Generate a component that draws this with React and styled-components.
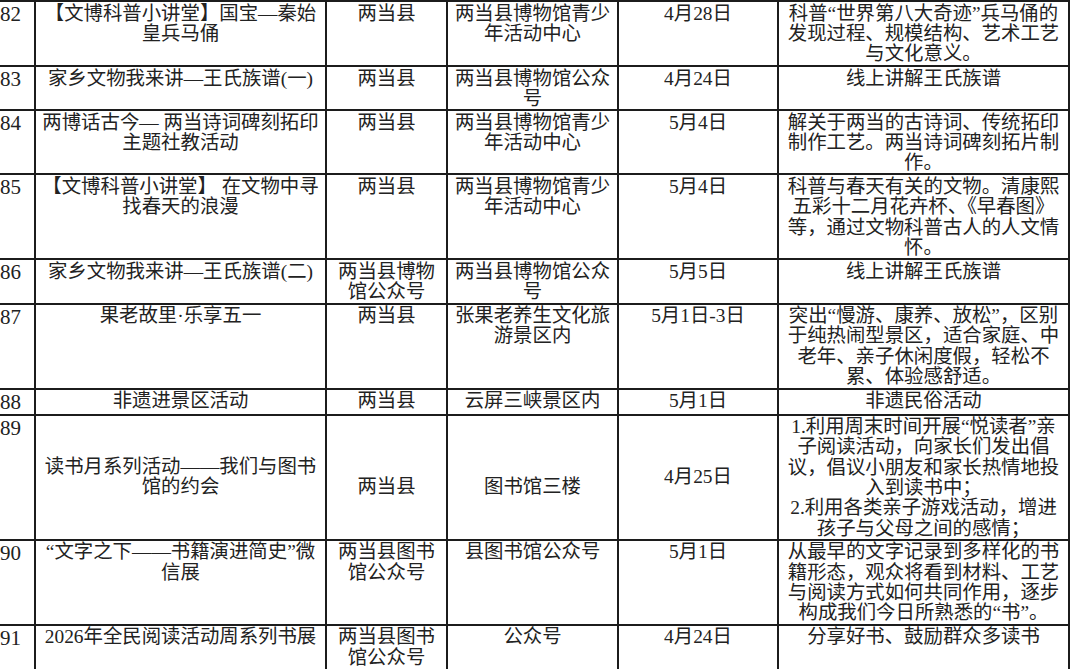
import React from "react";
import styled, { createGlobalStyle } from "styled-components";

const Global = createGlobalStyle`
  html, body { margin: 0; padding: 0; background: #ffffff; }
  body { overflow: hidden; }
`;

const Page = styled.div`
  width: 1080px;
  height: 669px;
  overflow: hidden;
  background: #fff;
`;

const Table = styled.table`
  border-collapse: collapse;
  table-layout: fixed;
  width: 1070px;
  font-family: "Liberation Serif", "Noto Sans CJK SC", serif;
  font-size: 19.4px;
  line-height: 20.3px;
  color: #222222;
`;

const Col = styled.col`
  width: ${(p) => p.$w}px;
`;

const Row = styled.tr`
  height: ${(p) => p.$h}px;
`;

const NoCell = styled.td`
  border: 2px solid #1c1c1c;
  border-left: none;
  padding: 2px 0 0 0;
  vertical-align: top;
  text-align: left;
  font-size: 21px;
  white-space: nowrap;
  overflow: hidden;
`;

const Cell = styled.td`
  border: 2px solid #1c1c1c;
  padding: ${(p) => (p.$pt === undefined ? 1.5 : p.$pt)}px 2px 0 2px;
  vertical-align: ${(p) => (p.$middle ? "middle" : "top")};
  text-align: center;
  overflow: hidden;
`;

const Line = styled.span`
  display: block;
  white-space: nowrap;
`;

const widths = [35, 291, 121, 171, 160, 291];

const rows = [
  { no: "82", h: 65, cells: [["【文博科普小讲堂】国宝—秦始", "皇兵马俑"], ["两当县"], ["两当县博物馆青少", "年活动中心"], ["4月28日"], ["科普“世界第八大奇迹”兵马俑的", "发现过程、规模结构、艺术工艺", "与文化意义。"]] },
  { no: "83", h: 44, cells: [["家乡文物我来讲—王氏族谱(一)"], ["两当县"], ["两当县博物馆公众", "号"], ["4月24日"], ["线上讲解王氏族谱"]] },
  { no: "84", h: 64, cells: [["两博话古今— 两当诗词碑刻拓印", "主题社教活动"], ["两当县"], ["两当县博物馆青少", "年活动中心"], ["5月4日"], ["解关于两当的古诗词、传统拓印", "制作工艺。两当诗词碑刻拓片制", "作。"]] },
  { no: "85", h: 85, cells: [["【文博科普小讲堂】 在文物中寻", "找春天的浪漫"], ["两当县"], ["两当县博物馆青少", "年活动中心"], ["5月4日"], ["科普与春天有关的文物。清康熙", "五彩十二月花卉杯、《早春图》", "等，通过文物科普古人的人文情", "怀。"]] },
  { no: "86", h: 44, cells: [["家乡文物我来讲—王氏族谱(二)"], ["两当县博物", "馆公众号"], ["两当县博物馆公众", "号"], ["5月5日"], ["线上讲解王氏族谱"]] },
  { no: "87", h: 85, cells: [["果老故里·乐享五一"], ["两当县"], ["张果老养生文化旅", "游景区内"], ["5月1日-3日"], ["突出“慢游、康养、放松”，区别", "于纯热闹型景区，适合家庭、中", "老年、亲子休闲度假，轻松不", "累、体验感舒适。"]] },
  { no: "88", h: 26, cells: [["非遗进景区活动"], ["两当县"], ["云屏三峡景区内"], ["5月1日"], ["非遗民俗活动"]] },
  {
    no: "89",
    h: 125,
    middle: [true, true, true, true, false],
    pad: [0, 20, 20, 0, 1.5],
    cells: [["读书月系列活动——我们与图书", "馆的约会"], ["两当县"], ["图书馆三楼"], ["4月25日"], ["1.利用周末时间开展“悦读者”亲", "子阅读活动，向家长们发出倡", "议，倡议小朋友和家长热情地投", "入到读书中；", "2.利用各类亲子游戏活动，增进", "孩子与父母之间的感情；"]],
  },
  { no: "90", h: 85, cells: [["“文字之下——书籍演进简史”微", "信展"], ["两当县图书", "馆公众号"], ["县图书馆公众号"], ["5月1日"], ["从最早的文字记录到多样化的书", "籍形态，观众将看到材料、工艺", "与阅读方式如何共同作用，逐步", "构成我们今日所熟悉的“书”。"]] },
  { no: "91", h: 46, cells: [["2026年全民阅读活动周系列书展"], ["两当县图书", "馆公众号"], ["公众号"], ["4月24日"], ["分享好书、鼓励群众多读书"]] },
];

export default function App() {
  return (
    <Page>
      <Global />
      <Table>
        <colgroup>
          {widths.map((w, i) => (
            <Col key={i} $w={w} />
          ))}
        </colgroup>
        <tbody>
          {rows.map((r) => (
            <Row key={r.no} $h={r.h}>
              <NoCell>{r.no}</NoCell>
              {r.cells.map((lines, i) => (
                <Cell
                  key={i}
                  $middle={r.middle ? r.middle[i] : false}
                  $pt={r.pad ? r.pad[i] : undefined}
                >
                  {lines.map((t, j) => (
                    <Line key={j}>{t}</Line>
                  ))}
                </Cell>
              ))}
            </Row>
          ))}
        </tbody>
      </Table>
    </Page>
  );
}
